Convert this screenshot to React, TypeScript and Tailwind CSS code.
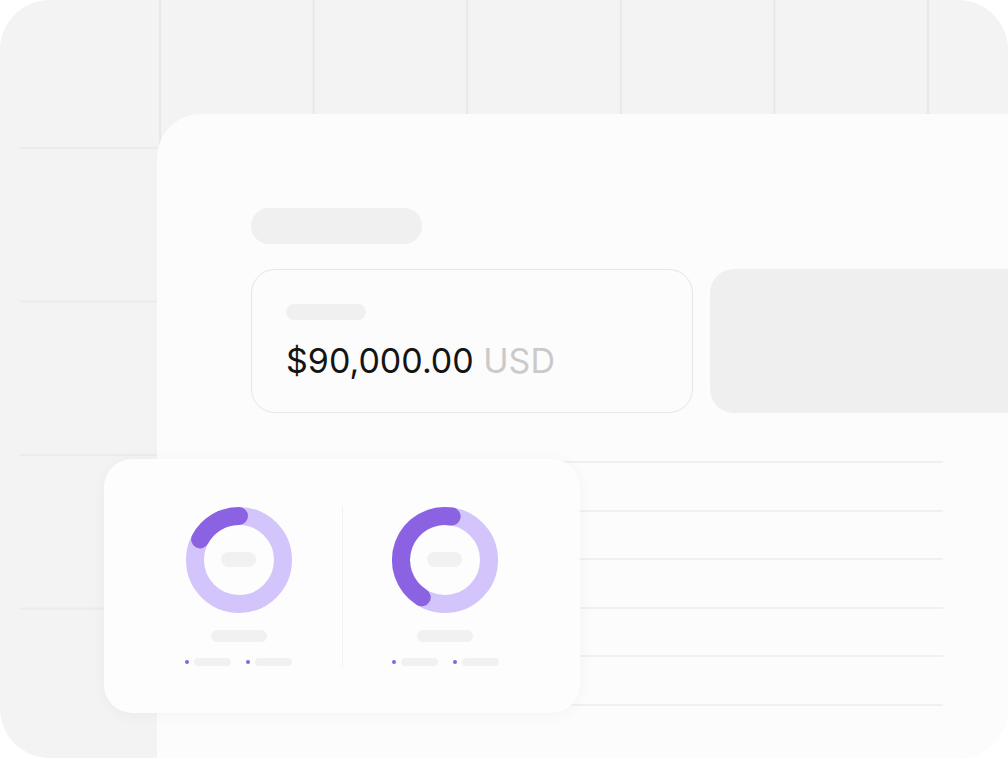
import React from 'react';

const RING = '#d3c5fb';
const ARC = '#8a62e2';

function Donut({ arc }: { arc: string }) {
  return (
    <svg width="108" height="108" viewBox="0 0 108 108" className="block">
      <circle cx="54" cy="54" r="44" fill="none" stroke={RING} strokeWidth="18" />
      <path d={arc} fill="none" stroke={ARC} strokeWidth="18" strokeLinecap="round" />
    </svg>
  );
}

function Legend() {
  return (
    <div className="flex items-center gap-[15px]">
      <div className="flex items-center gap-[5px]">
        <span className="w-[4px] h-[4px] rounded-full bg-[#8a62e2]" />
        <span className="w-[37px] h-[8px] rounded-full bg-[#f1f1f1]" />
      </div>
      <div className="flex items-center gap-[5px]">
        <span className="w-[4px] h-[4px] rounded-full bg-[#8a62e2]" />
        <span className="w-[37px] h-[8px] rounded-full bg-[#f1f1f1]" />
      </div>
    </div>
  );
}

function ChartColumn({ arc }: { arc: string }) {
  return (
    <div className="w-[206px] flex flex-col items-center">
      <div className="relative">
        <Donut arc={arc} />
        <span className="absolute left-[36px] top-[46px] w-[35px] h-[15px] rounded-full bg-[#f1f1f1]" />
      </div>
      <span className="mt-[16px] w-[56px] h-[12px] rounded-full bg-[#f1f1f1]" />
      <div className="mt-[16px]">
        <Legend />
      </div>
    </div>
  );
}

export default function App() {
  const rows = [0, 1, 2, 3, 4, 5];
  return (
    <div className="w-[1008px] h-[759px] bg-white" style={{ fontFamily: 'Inter, "Liberation Sans", sans-serif' }}>
      <div className="relative w-[1008px] h-[758px] overflow-hidden rounded-[50px] bg-[#f3f3f3] bg-[linear-gradient(to_right,#f3f3f3_0_20px,transparent_20px),linear-gradient(to_right,#e8e8e8_2px,transparent_2px),linear-gradient(to_bottom,#ebebeb_2px,transparent_2px)] bg-[size:100%_100%,153.6px_153.5px,153.6px_153.5px] bg-[position:0_0,159px_147px,159px_147px]">
        {/* main window */}
        <div className="ml-[157px] mt-[114px] h-[700px] rounded-tl-[44px] bg-[#fcfcfc] pl-[94px] pt-[94px]">
          <div className="w-[171px] h-[36px] rounded-full bg-[#f0f0f0]" />
          <div className="mt-[25px] flex">
            <div className="w-[442px] h-[144px] rounded-[24px] border-[1.5px] border-[#e6e6e6] bg-[#fcfcfc] pl-[34px] pt-[34px]">
              <div className="w-[80px] h-[16px] rounded-full bg-[#f0f0f0]" />
              <div className="mt-[24px] text-[34px] leading-none text-[#141414] whitespace-nowrap">
                $90,000.00 <span className="text-[#cacaca]">USD</span>
              </div>
            </div>
            <div className="ml-[17px] flex-1 h-[144px] rounded-l-[24px] bg-[#efefef]" />
          </div>
          <div className="mt-[48px] w-[692px] flex flex-col gap-[46.5px]">
            {rows.map((r) => (
              <div key={r} className="h-[2px] bg-[#f0f0f0]" />
            ))}
          </div>
        </div>

        {/* floating chart card */}
        <div className="absolute left-[104px] top-[459px] w-[476px] h-[254px] rounded-[28px] bg-[#fdfdfd] shadow-[0_2px_16px_rgba(0,0,0,0.04)] flex px-[32px] pt-[47px]">
          <ChartColumn arc="M 15.15 33.35 A 44 44 0 0 1 54 10" />
          <div className="w-px h-[161px] bg-[#f1f1f1]" />
          <ChartColumn arc="M 30.7 91.3 A 44 44 0 0 1 60.65 10.5" />
        </div>
      </div>
    </div>
  );
}
